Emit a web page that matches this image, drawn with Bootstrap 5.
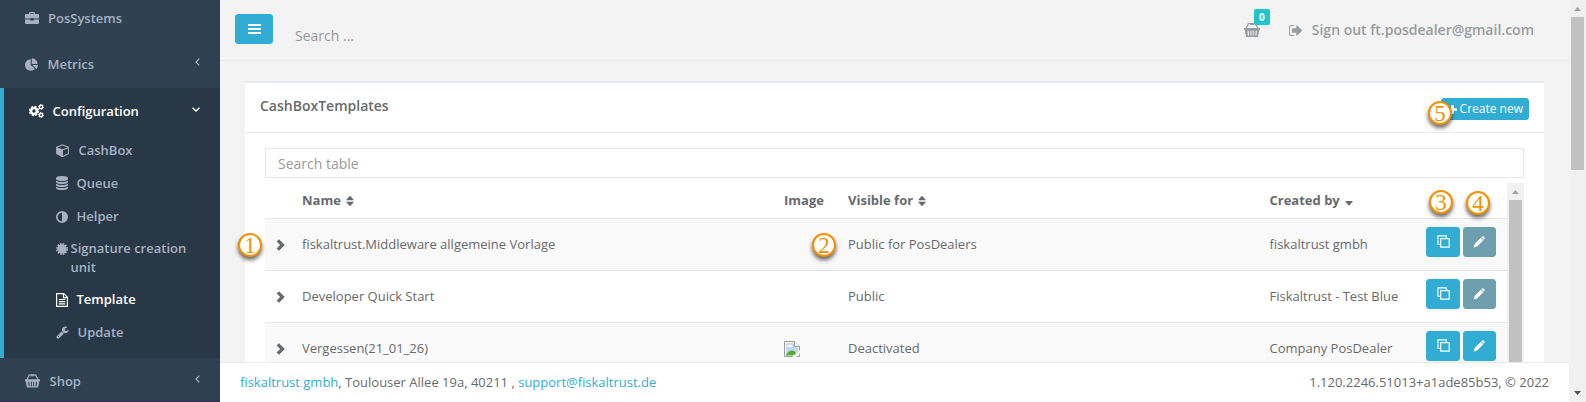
<!DOCTYPE html>
<html lang="en">
<head>
<meta charset="utf-8">
<title>CashBoxTemplates</title>
<link href="https://cdn.jsdelivr.net/npm/bootstrap@5.3.0/dist/css/bootstrap.min.css" rel="stylesheet">
<style>
body{font:13px/18.57px "Open Sans",sans-serif;color:#676a6c;background:#f3f3f4;height:402px;overflow:hidden}
svg{display:block;flex:none;fill:currentColor}
a{text-decoration:none}
.foot a{color:#31add3}
.side{width:220px;height:402px;background:#2f4050;color:#a7b1c2;font-weight:600;border-bottom:1px solid #2f3050}
.side a,.side a:not([href]){color:inherit;text-decoration:none}
.top-link{height:46.5px;padding:0 20px 0 25px}
.active-group{background:#293846;border-left:4px solid #31add3;height:270px}
.side .active-group .top-link{color:#fff;padding-top:1px}
.sub a{height:32.7px;padding-left:52px}
.topbar{height:61px;border-bottom:1px solid #e7eaec;color:#999c9e}
.btn{--bs-btn-border-radius:3px;--bs-btn-color:#fff;--bs-btn-bg:#31add3;--bs-btn-border-color:#31add3;--bs-btn-padding-x:0;--bs-btn-padding-y:0;--bs-btn-line-height:1;color:#fff}
.btn-menu{width:38px;height:30px;margin:14px 0 0 15px}
.find{font-size:14px;margin:26px 0 0 22px;line-height:20px;color:#999}
.cart{margin:23px 29px 0 0}
.count{position:absolute;left:10px;top:-14px;width:16px;height:16px;font-size:10px;line-height:16px;font-weight:700;background:#23c6c8;color:#fff;border-radius:2px;text-align:center}
.topbar .sign{font-size:14px;font-weight:600;line-height:20px;margin:20px 35px 0 0;color:inherit;text-decoration:none}
.panel{margin:20px 25px 0;border-top:2px solid #e7eaec;background:#fff;height:281px;overflow:hidden}
.panel-top{height:50px;border-bottom:1px solid #e7eaec;padding:0 15px}
.panel-top h5{font-size:14px;font-weight:600;line-height:18px;margin:14px 0 0}
.btn-new{width:88px;height:22px;margin-top:15px;font-size:12px}
.filter{height:30px;border:1px solid #e5e6e7;border-radius:1px;font-size:14px;padding:0 12px;color:#999;line-height:28px}
.filter::placeholder{color:#999}
.grid{width:1242px;table-layout:fixed;--bs-table-color:#676a6c;--bs-table-bg:transparent;color:#676a6c;border-color:#e7eaec}
.grid th,.grid td{padding:0;vertical-align:top;border-bottom:0}
.grid thead th{height:40px;padding-top:13px;font-weight:700}
.grid tbody tr{height:52px}
.grid tbody td{border-top:1px solid #e7e7e7;padding-top:16px}
.grid tbody tr:nth-child(odd){background:#f9f9f9}
.grid tbody .acts{padding-top:8px}
.btn-a{width:34px;height:30px}.btn-b{width:33px;height:30px;padding-right:1px}
.muted-btn{--bs-btn-bg:#6d9fae;--bs-btn-border-color:#6d9fae}
.sort{display:inline-block;vertical-align:-1px;margin-left:1.5px}
.bar-in{width:17px;background:#f1f1f1;margin-top:5px}
.thumb{background:#c1c1c1;width:13px}
.foot{height:40px;border-top:1px solid #e7eaec;background:#fff;padding:0 20px}
.bar-out{width:17px;background:#f1f1f1}
.pin{position:absolute;width:24px;height:24px;border:2px solid #f39200;border-radius:50%;background:#fff;color:#f39200;font:23px/21px "Liberation Serif",serif;text-align:center;box-shadow:0 3px 4px #0009}
</style>
</head>
<body class="d-flex position-relative">
<svg class="d-none">
<symbol id="basket" viewBox="0 0 16 14"><path d="M4 0h8l2.300 5H16v2h-.7L14 14H2L.7 7H0V5h1.700zm1 1L3 5h10l-2-4H5zM3.400 7.800l.5 4.700H5l-.4-4.700zm3 0v4.700h1V7.800zm2.300 0v4.700h1V7.800zm3 0-.4 4.700h1.100l.5-4.700z" fill-rule="evenodd"/><path d="M6 0h4v2H6z"/></symbol>
<symbol id="chev" viewBox="0 0 9 12"><path d="M.6 2.500 3 .2 8.800 6 3 11.800.6 9.500 4.100 6z"/></symbol>
<symbol id="copy" viewBox="0 0 13 13"><path d="M9.300 3.500V.9H.9v8.400h2.600" fill="none" stroke="#fff" stroke-width="1.100"/><path d="M3.700 3.700h8.500v8.500H3.700z" fill="none" stroke="#fff" stroke-width="1.200"/></symbol>
<symbol id="pen" viewBox="0 0 12 12"><path d="M8.300 1.200 9 .5q.8-.7 1.600 0l.8.800q.7.800 0 1.600l-.7.700zM7.800 1.700l2.500 2.500-5.900 6q-.4.400-.9.600L.6 11.500l.8-2.800q.2-.6.500-1z"/></symbol>
<symbol id="sortb" viewBox="0 0 8 10"><path d="M0 4.300h8L4.800.4Q4 -.3 3.200.4zM0 5.700h8L4.800 9.600Q4 10.300 3.200 9.600z"/></symbol>
</svg>
<nav class="side flex-shrink-0">
 <a class="top-link d-flex" style="height:41px;padding-top:9px"><svg width="14" height="12" viewBox="0 0 14 12" style="margin-top:3px"><path d="M4 2V1q0-1 1-1h4q1 0 1 1v1h3q1 0 1 1v3.500H8.500V6h-3v.5H0V3q0-1 1-1zm1.200 0h3.600v-.8H5.200zM0 7.400h5.500v1h3v-1H14V11q0 1-1 1H1q-1 0-1-1z"/></svg><span style="margin-left:9px">PosSystems</span></a>
 <a class="top-link d-flex align-items-center"><svg width="13" height="13" viewBox="0 0 1728 1664"><path d="M768 890l546 546q-106 108-247.500 168t-298.500 60q-209 0-385.500-103t-279.500-279.500-103-385.500 103-385.500 279.500-279.500 385.500-103v762zm187 6h773q0 157-60 298.500t-168 247.500zm709-128h-768v-768q209 0 385.500 103t279.500 279.500 103 385.500z"/></svg><span style="margin-left:9.500px">Metrics</span><svg class="ms-auto mb-1" width="5" height="8" viewBox="0 0 5 8"><path d="M4.300.6 1 4l3.300 3.400" fill="none" stroke="currentColor" stroke-width="1.200"/></svg></a>
 <div class="active-group">
  <a class="top-link d-flex align-items-center"><svg width="15" height="14" viewBox="0 0 15 14"><g fill="none" stroke="currentColor"><circle cx="5" cy="7" r="3" stroke-width="2.600"/><circle cx="5" cy="7" r="4.500" stroke-width="1.400" stroke-dasharray="2 1.530"/><circle cx="12" cy="3" r="1.700" stroke-width="1.500"/><circle cx="12" cy="3" r="2.600" stroke-width=".8" stroke-dasharray="1.200 1.520"/><circle cx="12" cy="11" r="1.700" stroke-width="1.500"/><circle cx="12" cy="11" r="2.600" stroke-width=".8" stroke-dasharray="1.200 1.520"/></g></svg><span style="margin-left:8.500px">Configuration</span><svg class="ms-auto mb-1" width="8" height="5" viewBox="0 0 8 5"><path d="M.6.7 4 4 7.400.7" fill="none" stroke="currentColor" stroke-width="1.400"/></svg></a>
  <div class="sub">
   <a class="d-flex align-items-center"><svg width="13" height="13" viewBox="0 64 1664 1700"><path d="M896 1629l640-349v-636l-640 233v752zm-64-865l698-254-698-254-698 254zm832-252v768q0 35-18 65t-49 47l-704 384q-28 16-61 16t-61-16l-704-384q-31-17-49-47t-18-65v-768q0-40 23-73t61-47l704-256q22-8 44-8t44 8l704 256q38 14 61 47t23 73z"/></svg><span style="margin-left:9.500px">CashBox</span></a>
   <a class="d-flex align-items-center"><svg width="12" height="14" viewBox="128 0 1536 1792"><path d="M896 768q237 0 443-43t325-127v170q0 69-103 128t-280 93.500-385 34.500-385-34.500-280-93.500-103-128v-170q119 84 325 127t443 43zm0 768q237 0 443-43t325-127v170q0 69-103 128t-280 93.500-385 34.500-385-34.500-280-93.500-103-128v-170q119 84 325 127t443 43zm0-384q237 0 443-43t325-127v170q0 69-103 128t-280 93.500-385 34.500-385-34.500-280-93.500-103-128v-170q119 84 325 127t443 43zm0-1152q208 0 385 34.500t280 93.500 103 128v128q0 69-103 128t-280 93.500-385 34.500-385-34.500-280-93.500-103-128v-128q0-69 103-128t280-93.500 385-34.500z"/></svg><span style="margin-left:8.500px">Queue</span></a>
   <a class="d-flex align-items-center" style="padding-top:2px"><svg width="12" height="12" viewBox="0 0 12 12"><path fill-rule="evenodd" d="M6 0a6 6 0 1 1 0 12A6 6 0 0 1 6 0zm0 1.700a4.300 4.300 0 0 0 0 8.600z"/></svg><span style="margin-left:8.500px">Helper</span></a>
   <a class="d-flex" style="height:51.300px;padding-top:8px"><svg width="12" height="12" viewBox="0 0 12 12" style="margin-top:3px"><circle cx="6" cy="6" r="4.800"/><circle cx="6" cy="6" r="5.200" fill="none" stroke="currentColor" stroke-width="1.500" stroke-dasharray="1.720 1"/></svg><span style="margin-left:2.500px;margin-top:-1px">Signature creation<br>unit</span></a>
   <a class="d-flex align-items-center text-white"><svg width="12" height="14" viewBox="0 0 12 14"><path fill="none" stroke="currentColor" stroke-width="1.200" d="M.6.6h7.200l3.600 3.600v9.200H.6zM7.500.6v4h4M2.800 6.500h6.400M2.800 8.700h6.400M2.800 10.900h6.400"/></svg><span style="margin-left:8.500px">Template</span></a>
   <a class="d-flex align-items-center"><svg width="13" height="13" viewBox="64 64 1680 1728"><path d="M448 1472q0-26-19-45t-45-19-45 19-19 45 19 45 45 19 45-19 19-45zm644-420l-682 682q-37 37-90 37-52 0-91-37l-106-108q-38-36-38-90 0-53 38-91l681-681q39 98 114.500 173.500t173.500 114.500zm634-435q0 39-23 106-47 134-164.500 217.500t-258.500 83.500q-185 0-316.500-131.500t-131.500-316.500 131.500-316.500 316.500-131.500q58 0 121.500 16.500t107.500 46.500q16 11 16 28t-16 28l-293 169v224l193 107q5-3 79-48.500t135.500-81 70.500-35.500q15 0 23.500 10t8.500 25z"/></svg><span style="margin-left:8.500px">Update</span></a>
  </div>
 </div>
 <a class="top-link d-flex align-items-center" style="height:43px;padding-top:4px"><svg width="15" height="14"><use href="#basket"/></svg><span style="margin-left:9.500px;padding-top:1px">Shop</span><svg class="ms-auto mb-1" width="5" height="8" viewBox="0 0 5 8"><path d="M4.300.6 1 4l3.300 3.400" fill="none" stroke="currentColor" stroke-width="1.200"/></svg></a>
</nav>
<div class="flex-grow-1 d-flex flex-column">
 <header class="topbar d-flex align-items-start">
  <button class="btn btn-menu d-flex align-items-center justify-content-center"><svg width="13" height="10"><path d="M0 0h13v2H0zM0 4h13v2H0zM0 8h13v2H0z"/></svg></button>
  <span class="find">Search ...</span>
  <div class="cart position-relative ms-auto"><svg width="16" height="14"><use href="#basket"/></svg><span class="count">0</span></div>
  <a class="sign d-flex align-items-center"><svg width="13" height="11" viewBox="96 256 1536 1280" preserveAspectRatio="none"><path d="M704 1440q0 4 1 20t.5 26.500-3 23.500-10 19.500-20.500 6.500h-320q-119 0-203.500-84.500t-84.500-203.500v-704q0-119 84.500-203.500t203.500-84.500h320q13 0 22.500 9.500t9.500 22.500q0 4 1 20t.5 26.500-3 23.500-10 19.500-20.500 6.500h-320q-66 0-113 47t-47 113v704q0 66 47 113t113 47h312l11.500 1 11.500 3 8 5.500 7 9 2 13.500zm928-544q0 26-19 45l-544 544q-19 19-45 19t-45-19-19-45v-288h-448q-26 0-45-19t-19-45v-384q0-26 19-45t45-19h448v-288q0-26 19-45t45-19 45 19l544 544q19 19 19 45z"/></svg><span style="margin-left:10px">Sign out ft.posdealer@gmail.com</span></a>
 </header>
 <main class="panel">
  <div class="panel-top d-flex justify-content-between align-items-start"><h5>CashBoxTemplates</h5>
   <button class="btn btn-new d-flex align-items-center justify-content-end"><svg width="9" height="9" viewBox="0 0 9 9"><path d="M3.200 0h2.600v3.200H9v2.600H5.800V9H3.200V5.800H0V3.200h3.200z"/></svg><span style="margin:0 5px 1px 3px">Create new</span></button></div>
  <div style="padding:15px 20px 0">
   <input class="filter w-100 d-block" placeholder="Search table">
   <div class="d-flex" style="height:200px">
    <table class="table grid mb-0 flex-shrink-0 align-self-start">
     <colgroup><col style="width:37px"><col style="width:482px"><col style="width:64px"><col style="width:421.500px"><col style="width:156.500px"><col></colgroup>
     <thead><tr><th></th><th>Name <svg class="sort" width="8" height="10"><use href="#sortb"/></svg></th><th>Image</th><th>Visible for <svg class="sort" width="8" height="10"><use href="#sortb"/></svg></th><th>Created by <svg class="sort" width="8" height="5" viewBox="0 0 8 5"><path d="M0 0h8L4.800 4Q4 4.800 3.200 4z"/></svg></th><th></th></tr></thead>
     <tbody>
      <tr><td><svg width="9" height="12" style="margin:4px 0 0 11px"><use href="#chev"/></svg></td><td>fiskaltrust.Middleware allgemeine Vorlage</td><td></td><td>Public for PosDealers</td><td>fiskaltrust gmbh</td><td class="acts"><div class="d-flex" style="gap:3px"><button class="btn btn-a d-flex align-items-center justify-content-center"><svg width="13" height="13"><use href="#copy"/></svg></button><button class="btn btn-b muted-btn d-flex align-items-center justify-content-center"><svg width="12" height="12"><use href="#pen"/></svg></button></div></td></tr>
      <tr><td><svg width="9" height="12" style="margin:4px 0 0 11px"><use href="#chev"/></svg></td><td>Developer Quick Start</td><td></td><td>Public</td><td>Fiskaltrust - Test Blue</td><td class="acts"><div class="d-flex" style="gap:3px"><button class="btn btn-a d-flex align-items-center justify-content-center"><svg width="13" height="13"><use href="#copy"/></svg></button><button class="btn btn-b muted-btn d-flex align-items-center justify-content-center"><svg width="12" height="12"><use href="#pen"/></svg></button></div></td></tr>
      <tr><td><svg width="9" height="12" style="margin:4px 0 0 11px"><use href="#chev"/></svg></td><td>Vergessen(21_01_26)</td><td><svg width="16" height="16" viewBox="0 0 16 16" style="margin-top:2px"><path d="M.5.5h10l5 5v10H.5z" fill="#fff" stroke="#9a9a9a"/><path d="M2 2h8v4h4v8H2z" fill="#c3d5f5"/><path d="M3 6q0-2 2-2 3-1 3 2z" fill="#fff"/><path d="M1.500 14.500q3-5 6.500-5t5 5z" fill="#57ab35"/><path d="M10.500.5v5h5" fill="#fff" stroke="#9a9a9a"/><path d="M8 16l8-7v3l-4 4z" fill="#fff"/></svg></td><td>Deactivated</td><td>Company PosDealer</td><td class="acts"><div class="d-flex" style="gap:3px"><button class="btn btn-a d-flex align-items-center justify-content-center"><svg width="13" height="13"><use href="#copy"/></svg></button><button class="btn btn-b d-flex align-items-center justify-content-center"><svg width="12" height="12"><use href="#pen"/></svg></button></div></td></tr>
     </tbody>
    </table>
    <div class="bar-in flex-shrink-0 d-flex flex-column align-items-center"><svg width="7" height="4" style="margin:7px 0 6px;color:#a3a3a3"><path d="M0 4 3.500 0 7 4z"/></svg><div class="thumb flex-grow-1"></div></div>
   </div>
  </div>
 </main>
 <footer class="foot d-flex align-items-center justify-content-between"><span><a href="#">fiskaltrust gmbh</a>, Toulouser Allee 19a, 40211 , <a href="#">support@fiskaltrust.de</a></span><span>1.120.2246.51013+a1ade85b53, © 2022</span></footer>
</div>
<div class="bar-out flex-shrink-0 d-flex flex-column align-items-center"><svg width="7" height="4" style="margin:7px 0 6px;color:#a3a3a3"><path d="M0 4 3.500 0 7 4z"/></svg><div class="thumb" style="height:153px"></div><svg class="mt-auto" width="7" height="4" style="margin-bottom:7px;color:#505050"><path d="M0 0 3.500 4 7 0z"/></svg></div>
<span class="pin" style="left:238px;top:233px">1</span>
<span class="pin" style="left:812px;top:233px">2</span>
<span class="pin" style="left:1429px;top:190px">3</span>
<span class="pin" style="left:1466px;top:191px">4</span>
<span class="pin" style="left:1428px;top:101px">5</span>
<script src="https://cdn.jsdelivr.net/npm/bootstrap@5.3.0/dist/js/bootstrap.bundle.min.js"></script>
</body>
</html>
